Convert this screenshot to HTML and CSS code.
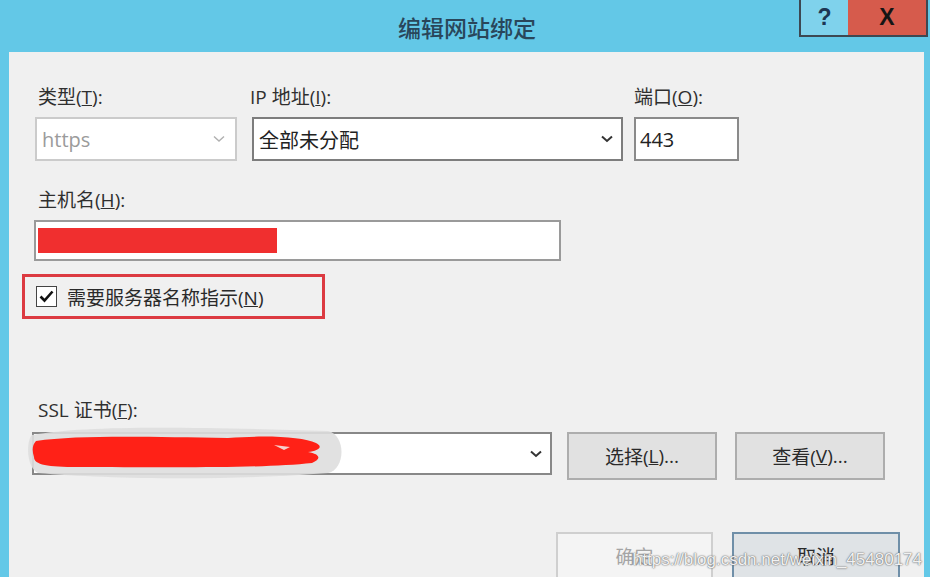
FILE: index.html
```html
<!DOCTYPE html>
<html lang="zh-CN">
<head>
  <meta charset="UTF-8">
  <title>编辑网站绑定</title>
  <link rel="stylesheet" href="styles.css">
</head>
<body>
  <div class="window">
    <div class="titlebar">
      <div class="title">编辑网站绑定</div>
      <div class="caption-buttons">
        <span class="caption-help">?</span>
        <span class="caption-close">X</span>
      </div>
    </div>

    <div class="dialog">
      <div class="row-top">
        <div class="field">
          <div class="label">类型(<u>T</u>):</div>
          <div class="select select-disabled">
            <span>https</span>
            <svg class="chevron" width="12" height="8" viewBox="0 0 12 8"><polyline points="1,1.5 6,6 11,1.5" fill="none" stroke="#b0b0b0" stroke-width="1.4"/></svg>
          </div>
        </div>
        <div class="field">
          <div class="label label-ip">IP 地址(<u>I</u>):</div>
          <div class="select">
            <span>全部未分配</span>
            <svg class="chevron" width="12" height="8" viewBox="0 0 12 8"><polyline points="1,1.5 6,6 11,1.5" fill="none" stroke="#333" stroke-width="2"/></svg>
          </div>
        </div>
        <div class="field field-port">
          <div class="label">端口(<u>O</u>):</div>
          <div class="textbox textbox-port">443</div>
        </div>
      </div>

      <div class="label label-host">主机名(<u>H</u>):</div>
      <div class="textbox textbox-host">
        <span class="redact-host"></span>
      </div>

      <div class="sni-box">
        <span class="checkbox">
          <svg width="15" height="13" viewBox="0 0 15 13"><polyline points="1.5,6.5 5.5,10.5 13.5,1.5" fill="none" stroke="#111" stroke-width="2.6"/></svg>
        </span>
        <span class="sni-text">需要服务器名称指示(<u>N</u>)</span>
      </div>

      <div class="label label-ssl">SSL 证书(<u>F</u>):</div>
      <div class="row-cert">
        <div class="select select-cert">
          <span class="redact-cert">
            <svg width="320" height="58" viewBox="0 0 320 58">
              <path d="M4 12 C60 2 160 4 300 8 C318 12 318 46 300 50 C200 58 80 56 10 50 C-2 44 -2 18 4 12 Z" fill="#dedede" opacity="0.9"/>
              <path d="M8 18 C50 12 120 14 200 15 C240 12 275 14 288 20 C296 24 290 28 280 29 C292 31 294 36 284 40 C230 46 120 44 50 44 C20 44 6 42 6 34 C4 28 4 22 8 18 Z" fill="#ff2117"/>
              <path d="M246 22 L262 24 L256 27 Z" fill="#f6d0cc"/>
            </svg>
          </span>
          <svg class="chevron" width="12" height="8" viewBox="0 0 12 8"><polyline points="1,1.5 6,6 11,1.5" fill="none" stroke="#333" stroke-width="2"/></svg>
        </div>
        <div class="button">选择(<u>L</u>)...</div>
        <div class="button button-view">查看(<u>V</u>)...</div>
      </div>

      <div class="row-actions">
        <div class="button button-ok">确定</div>
        <div class="button button-cancel">取消</div>
      </div>

      <div class="watermark">https://blog.csdn.net/weixin_45480174</div>
    </div>
  </div>
</body>
</html>
```

FILE: styles.css
```css
body {
  margin: 0;
  padding: 0;
  background: #63c8e7;
  font-family: "Open Sans", "Noto Sans CJK SC", sans-serif;
  color: #2b2b2b;
}
.window {
  width: 930px;
  height: 577px;
  overflow: hidden;
  background: #63c8e7;
}
.titlebar {
  position: relative;
  height: 52px;
  display: flex;
  align-items: center;
  justify-content: center;
}
.title {
  font-family: "Noto Sans CJK SC", sans-serif;
  font-size: 23px;
  font-weight: 500;
  color: #29465a;
  margin-top: 2px;
  margin-left: 4px;
}
.caption-buttons {
  position: absolute;
  top: 0;
  right: 2px;
  display: flex;
  height: 35px;
  border-left: 2px solid #3d4852;
  border-bottom: 2px solid #3d4852;
  border-right: 2px solid #3d4852;
}
.caption-help,
.caption-close {
  display: flex;
  align-items: center;
  justify-content: center;
  font-family: "Liberation Sans", sans-serif;
  font-weight: bold;
  font-size: 23px;
}
.caption-help {
  width: 47px;
  background: #7fd2ec;
  color: #1d3553;
}
.caption-close {
  width: 78px;
  background: #d65b4c;
  color: #151515;
}
.dialog {
  position: relative;
  margin: 0 6px 0 9px;
  height: 525px;
  background: #f0f0f0;
  padding: 33px 24px 0 26px;
  box-sizing: border-box;
}
.label {
  font-size: 19px;
  line-height: 24px;
  color: #2f2f2f;
  padding-left: 3px;
}
.label u {
  text-decoration-thickness: 1px;
}
.row-top {
  display: grid;
  grid-template-columns: 202px 371px 101px;
  column-gap: 15px;
}
.field-port {
  margin-left: -4px;
}
.field-port .label {
  padding-left: 0;
}
.label-ip {
  padding-left: 0;
  margin-left: -2px;
}
.select,
.textbox {
  box-sizing: border-box;
  background: #fff;
  display: flex;
  align-items: center;
  font-size: 20px;
  color: #222;
}
.row-top .select,
.row-top .textbox {
  margin-top: 8px;
  height: 44px;
}
.select {
  border: 2px solid #7d7d7d;
  padding: 0 8px 0 5px;
  justify-content: space-between;
}
.select-disabled {
  border-color: #cbcbcb;
  color: #9b9b9b;
}
.select-disabled .chevron {
  margin-right: 2px;
}
.textbox {
  border: 2px solid #8a8a8a;
  padding-left: 4px;
}
.label-host {
  margin-top: 27px;
}
.textbox-host {
  margin: 8px 0 0 -1px;
  width: 527px;
  height: 41px;
  border-color: #9a9a9a;
  padding-left: 2px;
}
.redact-host {
  display: block;
  width: 239px;
  height: 25px;
  background: #f02f2f;
}
.sni-box {
  margin: 13px 0 0 -13px;
  width: 303px;
  height: 45px;
  box-sizing: border-box;
  border: 3px solid #dc3a41;
  display: flex;
  align-items: center;
  padding-left: 11px;
}
.checkbox {
  box-sizing: border-box;
  width: 21px;
  height: 21px;
  border: 1px solid #444;
  background: #fff;
  display: flex;
  align-items: center;
  justify-content: center;
}
.sni-text {
  margin-left: 10px;
  font-size: 19px;
  color: #2a2a2a;
}
.label-ssl {
  margin-top: 79px;
}
.row-cert {
  display: flex;
  align-items: flex-start;
  margin-top: 10px;
}
.select-cert {
  position: relative;
  margin-left: -3px;
  width: 520px;
  height: 43px;
  justify-content: flex-end;
  border-color: #888;
}
.redact-cert {
  position: absolute;
  left: -6px;
  top: -11px;
}
.button {
  box-sizing: border-box;
  width: 150px;
  height: 48px;
  margin-left: 15px;
  background: #e1e1e1;
  border: 2px solid #adadad;
  display: flex;
  align-items: center;
  justify-content: center;
  font-size: 19px;
  color: #2a2a2a;
}
.button-view {
  margin-left: 18px;
}
.row-actions {
  display: flex;
  justify-content: flex-end;
  margin-top: 52px;
}
.button-ok {
  width: 157px;
  margin-left: 0;
  background: #f4f4f4;
  border-color: #cfcfcf;
  color: #a5a5a5;
}
.button-cancel {
  width: 168px;
  margin-left: 19px;
  background: #dfe3e6;
  border-color: #6f8fa8;
}
.watermark {
  position: absolute;
  right: 2px;
  bottom: 7px;
  font-family: "Liberation Sans", sans-serif;
  font-size: 17px;
  color: rgba(255, 255, 255, 0.92);
  text-shadow: 0 0 2px #6a6a6a, 0 0 1px #6a6a6a;
}
```
